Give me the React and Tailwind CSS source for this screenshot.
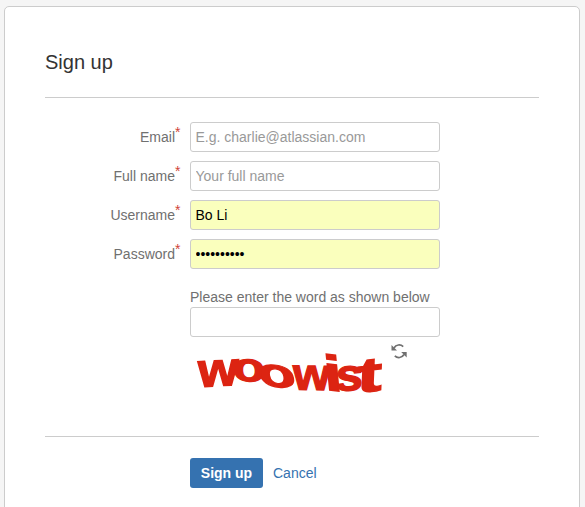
const inputBase =
  'block h-[30px] w-[250px] rounded-[3px] border border-[#ccc] px-[4.5px] text-[14px] leading-5 text-black outline-none placeholder:text-[#999] placeholder:opacity-100';

function Field({ label, filled, ...props }) {
  return (
    <div className="flex h-[30px]">
      <label className="relative w-[130px] pt-[5px] text-right text-[14px] leading-5 text-[#707070]">
        {label}
        <span className="absolute top-0 left-[130px] text-[14px] leading-5 text-[#d04437]">*</span>
      </label>
      <input className={`${inputBase} ml-[15px] ${filled ? 'bg-[#faffbd]' : 'bg-white'}`} {...props} />
    </div>
  );
}

// Each captcha letter is warped separately: [letter, transform]
const letters = [
  ['w', 'matrix(1.3 -0.07 0 1.2 8 44)'],
  ['o', 'matrix(1.34 0.06 0.04 1.02 43 37.5)'],
  ['o', 'matrix(1.54 0.16 0.2 1.02 70 42)'],
  ['w', 'matrix(1.2 0.02 0 1.13 103 46.5)'],
  ['i', 'matrix(1.6 0.2 0.12 1.24 135.5 46.500)'],
  ['s', 'matrix(1.24 -0.02 -0.05 1.12 145 47.5)'],
  ['t', 'matrix(1.85 -0.22 -0.05 1.22 166.5 50)'],
];

function Captcha() {
  return (
    <svg className="h-[60px] w-[200px] overflow-visible" viewBox="0 0 200 60" role="img" aria-label="woowist">
      <g className="fill-[#dc2412] stroke-[#dc2412] stroke-[1.2px] font-['Liberation_Sans',Arial,sans-serif] text-[40px] font-bold">
        {letters.map(([letter, transform], i) => (
          <text key={i} transform={transform}>{letter}</text>
        ))}
      </g>
    </svg>
  );
}

function RefreshIcon() {
  return (
    <svg className="ml-[0.5px] h-4 w-4" viewBox="0 0 16 16" fill="none" stroke="#707070" strokeWidth="1.7">
      <path d="M3 5C5 1.500 9.500 1 12.200 3.700" />
      <path d="M13 11.500C11 15 6.500 15.500 3.800 12.800" />
      <path d="M.5 2v5.500h5.500z" fill="#707070" stroke="none" />
      <path d="M15.700 14.500v-5.500h-5.500z" fill="#707070" stroke="none" />
    </svg>
  );
}

export default function App() {
  return (
    <div className="h-[507px] overflow-hidden bg-[#f5f5f5] pt-[6px] pl-[4px] font-['Liberation_Sans',Arial,sans-serif]">
      <main className="h-[520px] w-[576px] rounded-[5px] border border-[#ccc] bg-white px-10 pt-[40px]">
        <h1 className="h-[50px] text-[20px] leading-[30px] text-[#333]">Sign up</h1>
        <form className="w-[494px]">
          <div className="flex h-[340px] flex-col gap-[9px] border-y border-[#ccc] pt-6">
            <Field label="Email" placeholder="E.g. charlie@atlassian.com" />
            <Field label="Full name" placeholder="Your full name" />
            <Field label="Username" defaultValue="Bo Li" filled />
            <Field label="Password" type="password" defaultValue="abcdefghij" filled />
            <div className="ml-[145px] pt-[9px]">
              <label className="block text-[14px] leading-5 text-[#707070]">Please enter the word as shown below</label>
              <input className={`${inputBase} bg-white`} />
              <div className="flex items-start pt-[6px]">
                <Captcha />
                <RefreshIcon />
              </div>
            </div>
          </div>
          <div className="ml-[145px] flex items-center gap-[10px] pt-[21px] text-[14px]">
            <button type="button" className="h-[30px] w-[73px] rounded-[3px] bg-[#3572b0] font-bold text-white">Sign up</button>
            <a className="text-[#3572b0]">Cancel</a>
          </div>
        </form>
      </main>
    </div>
  );
}
